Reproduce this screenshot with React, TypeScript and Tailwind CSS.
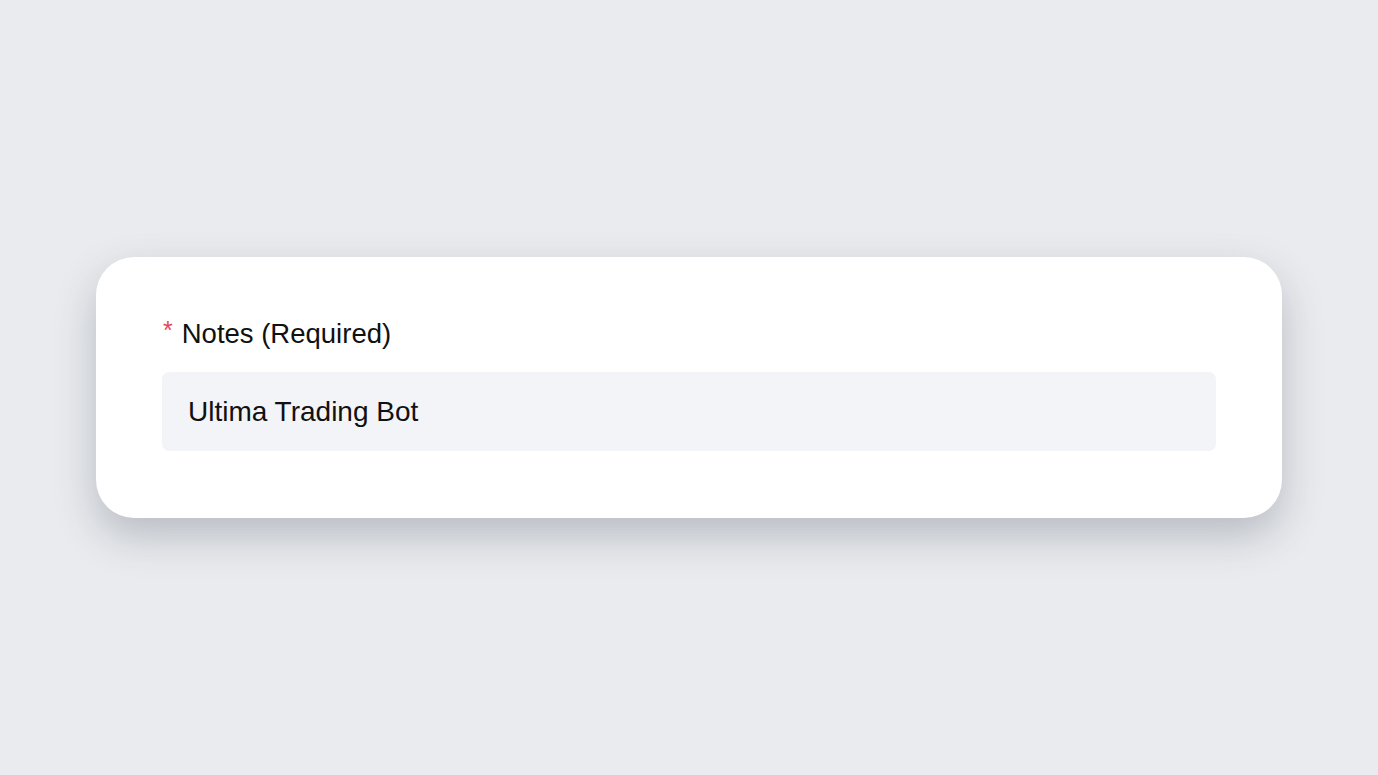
import React from "react";

export default function App() {
  return (
    <div className="w-[1378px] h-[775px] bg-[#e9ebee] flex items-center justify-center" style={{ fontFamily: '"Liberation Sans", Arial, sans-serif' }}>
      <div className="w-[1186px] h-[261px] bg-white rounded-[38px] shadow-[0_18px_40px_rgba(60,70,85,0.28)] px-[66px] pt-[61px] flex flex-col">
        <div className="flex items-center h-[32px] text-[27.5px] leading-[32px] text-[#111]">
          <span className="text-[#e8475b] text-[25px] leading-none -translate-y-[4px] ml-[1px] mr-[9px]">*</span>
          <span>Notes (Required)</span>
        </div>
        <div className="mt-[22px] h-[79px] bg-[#f3f4f7] rounded-[7px] flex items-center px-[26px] text-[28px] text-[#111]">
          Ultima Trading Bot
        </div>
      </div>
    </div>
  );
}
